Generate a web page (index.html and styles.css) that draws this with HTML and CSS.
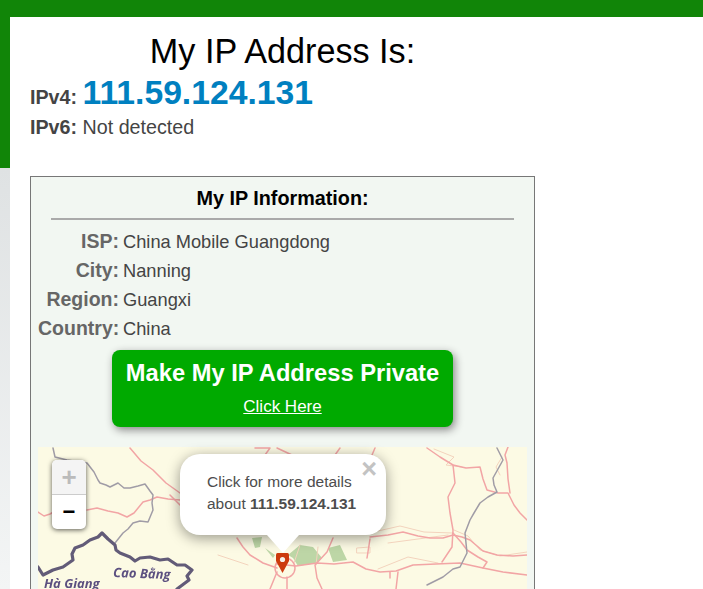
FILE: index.html
```html
<!DOCTYPE html>
<html lang="en">
<head>
<meta charset="utf-8">
<title>My IP Address</title>
<link rel="stylesheet" href="styles.css">
</head>
<body>
<div class="shell">
  <main class="content">
    <h1 class="title">My IP Address Is:</h1>
    <div class="ip-line ip-v4"><b class="ip-label">IPv4:</b> <a class="ip-value">111.59.124.131</a></div>
    <div class="ip-line ip-v6"><b class="ip-label">IPv6:</b> <span>Not detected</span></div>
    <section class="card">
      <h2 class="card-title">My IP Information:</h2>
      <hr class="rule">
      <dl class="info">
        <dt>ISP:</dt><dd>China Mobile Guangdong</dd>
        <dt>City:</dt><dd>Nanning</dd>
        <dt>Region:</dt><dd>Guangxi</dd>
        <dt>Country:</dt><dd>China</dd>
      </dl>
      <div class="cta">
        <div class="cta-title">Make My IP Address Private</div>
        <a class="cta-link">Click Here</a>
      </div>
      <div class="map">
        <svg class="map-art" viewBox="0 0 489 142" width="489" height="142">
          <g class="green">
            <polygon points="250,108 262,98 275,100 284,111 279,116 260,119 255,111"/>
            <polygon points="290,101 302,98 309,113 295,115"/>
            <polygon points="214,91 224,90 222,100 217,101"/>
            <polygon points="227,101 237,108 235,111"/>
          </g>
          <g class="road-soft">
            <path d="M396 2l20 8-8 8 16 2M340 122l30-12 30 6M416 83l14 6 12 14 20 6 27-4"/>
            <path d="M319 101L332 100L332 106L319 106ZM350 96l60-8M280 100l-2 18M262 98l-6 18"/>
            <path d="M340 84l22-5 24 6 28 1M464 10l-6 10 4 8M180 108l30 10"/>
          </g>
          <g class="road">
            <path d="M0 65L6 69L12 67L19 63M49 63L59 61L70 64L80 66L89 70L96 66L105 55L112 53L119 50L130 52L142 53"/>
            <path d="M92 1L103 14L115 23L128 36L142 46M132 48L142 58M199 91L205 100L212 108L225 116L239 121"/>
            <path d="M389 1L402 10L415 18L428 21L442 20L445 32L449 43L460 46L470 46L476 58L482 66L489 73"/>
            <path d="M415 18L417 36L410 50L412 66L415 83L414 100L410 106L404 115"/>
            <path d="M470 0L467 8L469 16L470 32L472 46"/>
            <path d="M239 117L258 119L279 116L296 117L315 115L328 122L342 125L358 124L375 118L398 117L422 116L445 121L465 125L489 128"/>
            <path d="M332 92L329 111M332 90L350 88L365 85L380 89L392 91L405 91L415 88L424 90L432 93L445 104L459 108L475 109L489 108"/>
            <path d="M415 86L423 95L429 103L440 110L449 115L445 121"/>
            <path d="M295 91L292 98L289 105L277 118L279 131L284 142M239 125L232 142M249 130V142"/>
            <path d="M360 125L358 142M352 125V131"/>
            <path d="M217 1L232 1L227 8M239 1L254 8M302 1L297 8M337 1L334 8"/>
            <circle cx="247" cy="121" r="10"/>
          </g>
          <path class="border" d="M15 1L17 10L29 13L49 16L56 25L60 33L62 36L68 38L72 40L80 36L86 41L92 41L100 39L107 37L112 44L115 48L114 56L115 63L110 75L102 74L95 76L90 82L85 86L77 96"/>
          <path class="border" d="M459 1L465 13L460 22L455 31L456 38L459 45L450 50L442 56L436 66L432 73L427 86L428 96L429 106L422 120L415 122L405 130L397 134L389 138"/>
          <path class="border-thick" d="M0 120L5 128L15 123L25 120L35 113L34 107L37 101L45 98L52 93L60 90L64 86L70 92L77 98L78 103L82 106L92 110L97 114L102 111L112 110L122 113L130 112L139 118L147 118L154 123L149 129L151 133L147 136L139 142"/>
          <text class="place" x="75" y="130" transform="rotate(2 75 130)">Cao Bằng</text>
          <text class="place" x="6" y="141">Hà Giang</text>
        </svg>
        <div class="zoom">
          <span class="zoom-btn zoom-in">+</span>
          <span class="zoom-btn zoom-out">−</span>
        </div>
        <div class="popup">
          <span class="popup-close">×</span>
          <p class="popup-text">Click for more details<br>about <b>111.59.124.131</b></p>
          <span class="popup-tip"></span>
        </div>
        <svg class="marker" viewBox="0 0 13 20" width="13" height="20">
          <path class="marker-body" d="M1.5 0H11.500Q13 0 13 2V8L6.500 20L0 8V2Q0 0 1.500 0Z"/>
          <circle class="marker-dot" cx="6.500" cy="6.500" r="2.600"/>
        </svg>
      </div>
    </section>
  </main>
</div>
</body>
</html>
```

FILE: styles.css
```css
html, body {
  margin: 0;
  height: 100%;
  overflow: hidden;
}
body {
  font-family: "Liberation Sans", Arial, sans-serif;
  background: #fff;
}
.shell {
  height: 100%;
  box-sizing: border-box;
  padding: 17px 0 0 10px;
  background: linear-gradient(#118508 168px, #dfe2e3 168px, #f3f5f5 589px);
}
.content {
  background: #fff;
  height: 100%;
  padding: 14px 0 0 20px;
  box-sizing: border-box;
}
.title {
  margin: 0;
  width: 505px;
  font-size: 34.2px;
  line-height: 41px;
  font-weight: 400;
  color: #000;
  text-align: center;
}
.ip-line {
  color: #444;
  font-size: 19.700px;
}
.ip-v4 {
  line-height: 41px;
}
.ip-v6 {
  line-height: 19px;
}
.ip-label {
  font-size: 19.700px;
}
.ip-value {
  font-size: 33.700px;
  font-weight: 700;
  color: #0080c0;
}
.card {
  width: 489px;
  margin-top: 39px;
  padding: 10px 7px 0;
  border: 1px solid #777;
  background: #f2f7f2;
}
.card-title {
  margin: 0;
  font-size: 19.800px;
  line-height: 22px;
  font-weight: 700;
  color: #000;
  text-align: center;
}
.rule {
  height: 2px;
  margin: 9px 13px 7px;
  border: 0;
  background: #aaa;
}
.info {
  display: grid;
  grid-template-columns: 81px 1fr;
  column-gap: 4px;
  margin: 0;
  grid-auto-rows: 29px;
  align-items: center;
}
.info dt {
  font-size: 19.500px;
  font-weight: 700;
  color: #666;
  text-align: right;
  white-space: nowrap;
}
.info dd {
  margin: 0;
  font-size: 18.250px;
  color: #444;
}
.cta {
  width: 341px;
  height: 77px;
  margin: 7px auto 20px;
  background: #0a0;
  border-radius: 8px;
  box-shadow: 2px 3px 8px #888;
  color: #fff;
  text-align: center;
  overflow: hidden;
}
.cta-title {
  margin-top: 8px;
  font-size: 23.700px;
  line-height: 30px;
  font-weight: 700;
}
.cta-link {
  display: inline-block;
  margin-top: 9px;
  font-size: 17px;
  line-height: 20px;
  text-decoration: underline;
}
.map {
  position: relative;
  width: 489px;
  height: 260px;
  background: #fcfae4;
}
.map-art {
  display: block;
  filter: blur(.5px);
}
.green polygon {
  fill: #bdd6a6;
}
.road, .road-soft, .border, .border-thick {
  fill: none;
  stroke-linejoin: round;
  stroke-linecap: round;
}
.road {
  stroke: #f2a5a5;
  stroke-width: 1.500;
}
.road-soft {
  stroke: #f3d3bd;
  stroke-width: 1;
}
.border {
  stroke: #a09ca6;
  stroke-width: 1.500;
}
.border-thick {
  stroke: #625b78;
  stroke-width: 3.200;
}
.place {
  font-family: "Open Sans", sans-serif;
  font-size: 13px;
  font-style: italic;
  font-weight: 700;
  fill: #5c5080;
  stroke: #fcfae4;
  stroke-width: 2;
  paint-order: stroke;
}
.zoom {
  position: absolute;
  left: 14px;
  top: 13px;
  width: 34px;
  display: flex;
  flex-direction: column;
  border-radius: 5px;
  background: #fff;
  box-shadow: 0 1px 5px rgba(0, 0, 0, .65);
  overflow: hidden;
}
.zoom-btn {
  height: 34px;
  text-align: center;
  font-family: "Liberation Sans", sans-serif;
  font-weight: 700;
  line-height: 34px;
}
.zoom-in {
  font-size: 26px;
  background: #f4f4f4;
  color: #bbb;
  border-bottom: 1px solid #ccc;
}
.zoom-out {
  font-size: 22px;
  color: #000;
}
.marker {
  position: absolute;
  left: 238px;
  top: 106px;
}
.marker-body {
  fill: #cc3a0c;
}
.marker-dot {
  fill: #f6efe6;
}
.popup {
  position: absolute;
  left: 142px;
  top: 7px;
  width: 206px;
  height: 81px;
  border-radius: 20px;
  background: #fff;
  box-shadow: 0 3px 14px rgba(0, 0, 0, .4);
  color: #4d4d4d;
}
.popup-text {
  margin: 17px 0 0 27px;
  font-size: 15.500px;
  line-height: 22px;
}
.popup-close {
  position: absolute;
  right: 9px;
  top: 3px;
  font-family: "Liberation Sans", sans-serif;
  font-weight: 700;
  font-size: 27px;
  line-height: 24px;
  color: #c3c3c3;
}
.popup-tip {
  position: absolute;
  left: 87px;
  top: 81px;
  width: 0;
  height: 0;
  border-left: 16px solid transparent;
  border-right: 16px solid transparent;
  border-top: 18px solid #fff;
}
```
